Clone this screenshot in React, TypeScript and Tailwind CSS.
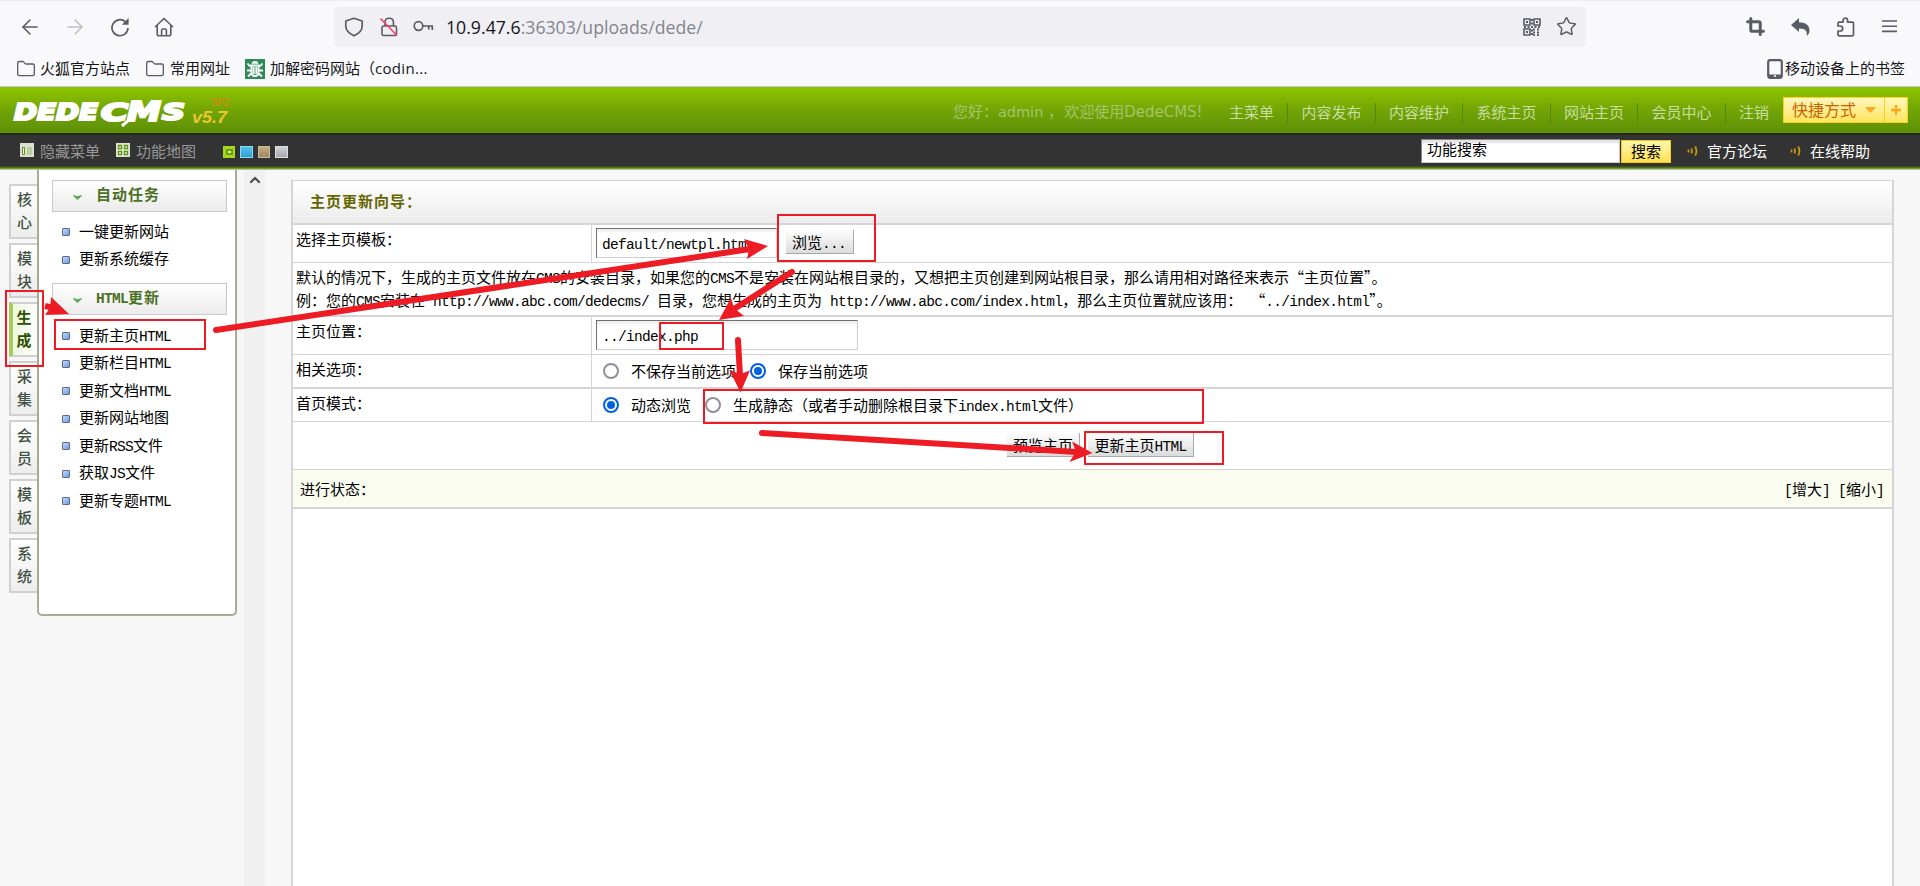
import type { ReactNode } from "react";
import { ArrowLeft, ArrowRight, ChevronUp, Crop, Folder, Star } from "lucide-react";

const NAV = ["主菜单", "内容发布", "内容维护", "系统主页", "网站主页", "会员中心", "注销"];
const TABS = ["核心", "模块", "生成", "采集", "会员", "模板", "系统"];

interface MenuItem {
  zh: string;
  latin?: string;
  tail?: string;
}

const AUTO_TASKS: MenuItem[] = [{ zh: "一键更新网站" }, { zh: "更新系统缓存" }];

const HTML_TASKS: MenuItem[] = [
  { zh: "更新主页", latin: "HTML" },
  { zh: "更新栏目", latin: "HTML" },
  { zh: "更新文档", latin: "HTML" },
  { zh: "更新网站地图" },
  { zh: "更新", latin: "RSS", tail: "文件" },
  { zh: "获取", latin: "JS", tail: "文件" },
  { zh: "更新专题", latin: "HTML" },
];

// Half-width text: 8px per character next to 15px hanzi
function L({ children }: { children: ReactNode }) {
  return (
    <span className="whitespace-pre font-['Liberation_Mono',monospace] text-[14.5px] leading-[0] tracking-[-0.7px]">
      {children}
    </span>
  );
}

function BrowserBar() {
  return (
    <div className="h-[87px] border-b border-[#c6c6d0] bg-[#f9f9fb] font-['Open_Sans','Noto_Sans_CJK_SC',sans-serif] text-[#15141a]">
      <div className="flex h-[47px] items-center border-t border-[#ececf0] pt-[5px] text-[#5b5b66]">
        <ArrowLeft className="ml-[18px] size-6" strokeWidth={1.6} />
        <ArrowRight className="ml-[21px] size-6 text-[#bfbfc6]" strokeWidth={1.6} />
        <svg className="ml-[23px] size-5" viewBox="0 0 20 20" fill="none" stroke="currentColor" strokeWidth="1.7">
          <path d="M18 11a8 8 0 1 1-2.6-6.2" />
          <path d="M18.6 1v6.8h-6.8z" fill="currentColor" stroke="none" />
        </svg>
        <svg className="ml-6 size-5" viewBox="0 0 20 20" fill="none" stroke="currentColor" strokeWidth="1.6" strokeLinejoin="round">
          <path d="M1 10 10 1.5 19 10M3.2 8.5V17q0 1.8 1.8 1.8h10q1.8 0 1.8-1.8V8.5M7.6 18.6v-5q0-1.6 1.2-1.6h2.4q1.2 0 1.2 1.6v5" />
        </svg>
        <div className="ml-[160px] flex h-10 w-[1252px] items-center rounded-[5px] bg-[#f0f0f4] pl-[10px] pr-[9px]">
          <svg className="size-5" viewBox="0 0 20 20" fill="none" stroke="currentColor" strokeWidth="1.7" strokeLinejoin="round">
            <path d="M10 1.2 18.2 4v5c0 4.5-3.4 7.6-8.2 9.8C5.2 16.6 1.8 13.5 1.8 9V4z" />
          </svg>
          <svg className="ml-[15px] size-5" viewBox="0 0 20 20" fill="none" stroke="currentColor" strokeWidth="1.6">
            <path d="M6 9V5q0-3.800 4.200-3.800T14.400 5v4" />
            <rect x="3" y="9" width="14.5" height="9.5" rx="1.6" />
            <path d="m1.500 1.500 16.500 17" stroke="#ff3b6b" />
          </svg>
          <svg className="ml-[14px] h-5 w-[21px]" viewBox="0 0 21 20" fill="none" stroke="currentColor" strokeWidth="1.7">
            <circle cx="5.5" cy="9" r="4.3" />
            <path d="M9.800 9H20M19.300 9v4M15.700 9v3.400" />
          </svg>
          <span className="ml-[12px] text-[17.7px] leading-10 text-[#15141a]">
            10.9.47.6<span className="text-[#84848e]">:36303/uploads/dede/</span>
          </span>
          <svg className="ml-auto size-[18px]" viewBox="0 0 18 18" fill="none" stroke="currentColor" strokeWidth="1.6">
            <path d="M1 1h6v6H1zM11 1h6v6h-6zM1 11h6v6H1z" />
            <path d="M3 4h2M13 4h2M3 14h2M9 1v16M1 9h17" strokeDasharray="2 1.5" strokeWidth="2" />
            <path d="M10 11.500h8M10 14.500h8M10 17.200h8" strokeDasharray="2 2" strokeWidth="1.8" />
          </svg>
          <Star className="ml-[15px] size-[21px]" strokeWidth={1.7} />
        </div>
        <Crop className="ml-[160px] size-[19px]" strokeWidth={3.8} />
        <svg className="ml-[26px] h-[18px] w-[19px]" viewBox="0 0 19 18" fill="currentColor">
          <path d="M0 7 8 0v4.200c6.500 0 10.500 3 10.500 8.300 0 2.500-1.200 4.300-2.800 5.300.8-4.300-1-7.500-7.700-7.300V14z" />
        </svg>
        <svg className="ml-[26px] size-5" viewBox="0 0 20 20" fill="none" stroke="currentColor" strokeWidth="1.7" strokeLinejoin="round">
          <path d="M2 9V6.500Q2 5.200 3.300 5.200H7V3.500a2.300 2.300 0 0 1 4.600 0v1.700h4.600q1.300 0 1.300 1.300V17.500q0 1.300-1.300 1.300H3.300Q2 18.800 2 17.500V14h2.200a2.400 2.400 0 0 0 0-5z" />
        </svg>
        <svg className="ml-[26px] h-[14px] w-[15px]" viewBox="0 0 15 14" stroke="currentColor" strokeWidth="1.6">
          <path d="M0 1h15M0 6.200h15M0 11.400h15" />
        </svg>
      </div>
      <div className="flex h-[39px] items-center px-4 pt-[4px] text-[15px]">
        <Folder className="size-5 text-[#5b5b66]" strokeWidth={1.6} />
        <span className="ml-1">火狐官方站点</span>
        <Folder className="ml-[15px] size-5 text-[#5b5b66]" strokeWidth={1.6} />
        <span className="ml-[5px]">常用网址</span>
        <svg className="ml-[15px] size-5" viewBox="0 0 20 20" fill="none" stroke="#fff" strokeWidth="1.8">
          <rect width="20" height="20" fill="#2e8b57" stroke="none" />
          <path d="M6.500 4.800Q7 2 10 2t3.500 2.800z" fill="#fff" stroke="none" />
          <path d="M5 6.500h10M6.500 6v8.500Q7 17 10 17t3.500-2.500V6M2.500 4.500 5 7.500M17.500 4.500 15 7.500M2 11.500h4.500M18 11.500h-4.500M3 17.500l3.500-3.500M17 17.500 13.500 14M8.700 8v7M11.300 8v7" />
        </svg>
        <span className="ml-[5px]">
          加解密码网站（<span className="tracking-[0.3px]">codin...</span>
        </span>
        <svg className="ml-auto h-5 w-4" viewBox="0 0 16 20">
          <rect x="1.2" y="1.2" width="13.6" height="17.6" rx="2" fill="none" stroke="#5b5b66" strokeWidth="2.2" />
          <path d="M1 15.500h14V19H1z" fill="#5b5b66" />
          <circle cx="8" cy="17" r="1" fill="#fff" />
        </svg>
        <span className="ml-[2px] mr-[-1px]">移动设备上的书签</span>
      </div>
    </div>
  );
}

function Logo() {
  return (
    <svg className="h-[46px] w-[240px]" viewBox="0 0 240 46" fontFamily="'DejaVu Sans', sans-serif" fontWeight="bold" fontStyle="italic">
      <g fill="#fff" stroke="#fff" strokeWidth="2.2">
        <text x="14" y="33" fontSize="23" textLength="84" lengthAdjust="spacingAndGlyphs">DEDE</text>
        <text x="101" y="33.5" fontSize="24" textLength="27" lengthAdjust="spacingAndGlyphs">C</text>
        <text x="127" y="33.5" fontSize="27" textLength="34" lengthAdjust="spacingAndGlyphs">M</text>
        <text x="162" y="33" fontSize="23" textLength="23" lengthAdjust="spacingAndGlyphs">S</text>
        <path d="m130 32-8 7" strokeWidth="3" />
      </g>
      <text x="192" y="36" fontSize="17" fill="#ecc530" fontFamily="'Liberation Sans', sans-serif" textLength="35" lengthAdjust="spacingAndGlyphs">v5.7</text>
      <text x="211" y="19" fontSize="11" fill="#e08214" fontStyle="normal" fontWeight="normal" textLength="19" lengthAdjust="spacingAndGlyphs">SP2</text>
    </svg>
  );
}

function Speaker() {
  return (
    <svg className="h-3 w-3" viewBox="0 0 12 12" fill="none" stroke="#c99a0c" strokeWidth="1.8">
      <path d="M1.500 4.500v3M4.800 3.500v5M8.200 1.500q2.500 4.500 0 9" />
    </svg>
  );
}

function Header() {
  return (
    <header className="font-['DejaVu_Sans','Noto_Sans_CJK_SC',sans-serif] text-[15px]">
      <div className="flex h-[46px] justify-between bg-linear-to-b from-[#8ec500] via-[#72a505] to-[#5e8f08]">
        <Logo />
        <div className="flex items-center pr-3 pt-[5px] text-[#c9dda0]">
          <span className="mr-[14px] w-[262px] whitespace-nowrap text-[#a3c46a]">
            您好：<span className="text-[14.5px]">admin</span> ，<span className="ml-[1px]">欢迎使用</span>DedeCMS!
          </span>
          {NAV.map((n, i) => (
            <span
              key={n}
              className={
                i < NAV.length - 1
                  ? "mr-[13px] border-r border-[#578606] pr-[13.5px] leading-[20px]"
                  : "leading-[20px]"
              }
            >
              {n}
            </span>
          ))}
          <div className="ml-[14px] mt-[-5px] flex h-[26px] border border-[#f7d417] bg-linear-to-b from-[#fff6b8] to-[#ffe55c] text-[#cc6100]">
            <span className="flex w-[101px] items-center border-r border-[#f7d417] pl-[8px] text-[16px]">
              <span className="pt-[1px]">快捷方式</span>
              <svg className="ml-[9px] h-[6px] w-[11px]" viewBox="0 0 11 6" fill="#fba81f">
                <path d="M0 0h11L5.500 6z" />
              </svg>
            </span>
            <span className="flex w-[22px] items-center justify-center">
              <svg className="size-[10px]" viewBox="0 0 10 10" stroke="#fba81f" strokeWidth="2.5">
                <path d="M5 0v10M0 5h10" />
              </svg>
            </span>
          </div>
        </div>
      </div>
      <div className="flex h-[33px] items-center border-t-2 border-[#25290f] bg-[#333] text-[#979797]">
        <svg className="ml-5 size-[15px]" viewBox="0 0 15 15">
          <path d="M0 0h14v14H0z" fill="#dcdfd4" />
          <path d="M2.500 4.500h2v7h-2z" fill="#fff" stroke="#5d9410" />
          <path d="M7 4h5v8H7z" fill="#b9cfa0" />
        </svg>
        <span className="ml-[5px] pt-[3px]">隐藏菜单</span>
        <svg className="ml-[16px] size-[15px]" viewBox="0 0 15 15">
          <path d="M0 0h14v14H0z" fill="#dfe5d2" />
          <path d="M2.500 2.500h3v3h-3zM8.500 2.500h3v3h-3zM2.500 8.500h3v3h-3zM8.500 8.500h3v3h-3z" fill="#fff" stroke="#5d9410" strokeWidth="1.3" />
        </svg>
        <span className="ml-[5px] pt-[3px]">功能地图</span>
        <div className="ml-[27px] flex gap-[5px] pt-[2px]">
          <span className="flex size-3 items-center justify-center bg-[#a6d61e]">
            <span className="h-[6px] w-[7px] border-2 border-[#6c9e08] bg-[#e6f5a8]" />
          </span>
          <span className="h-3 w-[13px] border border-[#8ed8f3] bg-linear-to-b from-[#53c3ec] to-[#2c9fd3]" />
          <span className="h-3 w-[12px] border border-[#cbbb98] bg-linear-to-b from-[#c4ae83] to-[#9b8867]" />
          <span className="h-3 w-[13px] border border-[#dcdfe2] bg-linear-to-b from-[#cfd2d6] to-[#a5a9ae]" />
        </div>
        <div className="ml-auto flex h-6 w-[199px] items-center border border-[#8a8a8a] border-b-[#ccc] border-r-[#ccc] bg-white pl-[5px] text-black shadow-[inset_0_3px_2px_#e4e4e4]">
          功能搜索
        </div>
        <button className="ml-[1px] mt-[2px] h-[23px] w-[50px] border border-[#f7c917] bg-linear-to-b from-[#fff6b0] to-[#ffe248] leading-[20px] text-black">
          搜索
        </button>
        <div className="ml-[16px] flex items-center text-white">
          <Speaker />
          <span className="ml-[8px] pt-[3px]">官方论坛</span>
        </div>
        <div className="ml-[23px] mr-[50px] flex items-center text-white">
          <Speaker />
          <span className="ml-[8px] pt-[3px]">在线帮助</span>
        </div>
      </div>
      <div className="h-1 bg-linear-to-b from-[#31400f] via-[#5d7f2a] to-[#cfe2a6]" />
    </header>
  );
}

function MenuHeading({ children }: { children: ReactNode }) {
  return (
    <div className="flex h-[32px] items-center border border-[#c9c9c9] bg-linear-to-b from-white to-[#ebebeb] pb-[5px] pl-[20px] font-bold tracking-[1px] text-[#4b7125]">
      <svg className="mr-[14px] mt-[7px] h-[5px] w-[9px]" viewBox="0 0 10 6" fill="#5da95a">
        <path d="m0 0 5 1.500L10 0v1.500L5 6 0 1.500z" />
      </svg>
      <span>{children}</span>
    </div>
  );
}

function MenuList({ items }: { items: MenuItem[] }) {
  return (
    <ul className="pl-[10px]">
      {items.map((m) => (
        <li key={m.zh + m.latin} className="flex h-[27.5px] items-center whitespace-nowrap">
          <span className="mr-[9px] mt-[3px] size-2 rounded-[1px] border border-[#5f6a7c] bg-linear-to-br from-[#bfd9ff] to-[#6d9be8]" />
          <span>
            {m.zh}
            {m.latin && <L>{m.latin}</L>}
            {m.tail}
          </span>
        </li>
      ))}
    </ul>
  );
}

function Sidebar() {
  return (
    <aside className="flex w-[244px] shrink-0">
      <div className="ml-[9px] w-7 pt-[14px]">
        {TABS.map((t) => (
          <div
            key={t}
            className={
              t === "生成"
                ? "mb-[4px] flex h-[55px] flex-col items-center border-2 border-l-4 border-r-0 border-[#d0d0d0] border-l-[#a3cb60] bg-linear-to-r from-[#eef6dd] to-white pr-[2px] pt-[2px] font-bold leading-[22.5px] text-[#2c5000]"
                : "mb-[4px] flex h-[55px] flex-col items-center border-2 border-r-0 border-[#d0d0d0] bg-linear-to-b from-white to-[#ededed] pl-[1px] pt-[2px] font-medium leading-[22.5px] text-[#3f5140]"
            }
          >
            <span>{t[0]}</span>
            <span>{t[1]}</span>
          </div>
        ))}
      </div>
      <div className="h-[446px] w-[200px] rounded-b-[5px] border-2 border-t-0 border-[#a9ab98] bg-white pl-[13px] pr-[8px] pt-[10px]">
        <MenuHeading>自动任务</MenuHeading>
        <div className="pb-[11px] pt-[5px]">
          <MenuList items={AUTO_TASKS} />
        </div>
        <MenuHeading>
          <L>HTML</L>更新
        </MenuHeading>
        <div className="pt-[6px]">
          <MenuList items={HTML_TASKS} />
        </div>
      </div>
    </aside>
  );
}

function Radio({ on }: { on?: boolean }) {
  return on ? (
    <span className="flex size-4 items-center justify-center rounded-full border-2 border-[#0060df] bg-white">
      <span className="size-2 rounded-full bg-[#0060df]" />
    </span>
  ) : (
    <span className="size-4 rounded-full border-2 border-[#8f8f9d] bg-white" />
  );
}

function Row({ label, className, children }: { label: string; className: string; children: ReactNode }) {
  return (
    <div className={`flex border-[#d5d5d5] ${className}`}>
      <div className="w-[299px] border-r border-[#d5d5d5] pl-[3px] pt-[3px] leading-[22px]">{label}</div>
      <div className="flex flex-1 items-center">{children}</div>
    </div>
  );
}

function PushButton({ className, children }: { className: string; children: ReactNode }) {
  return (
    <button className={`h-6 border-b border-r border-[#a8a8a8] bg-linear-to-b from-[#fdfdfd] to-[#dcdcdc] leading-[20px] ${className}`}>
      {children}
    </button>
  );
}

function TextField({ className, children }: { className: string; children: ReactNode }) {
  return (
    <div className={`ml-1 flex h-[30px] items-center border border-[#cfcfcf] border-l-[#707070] border-t-[#707070] bg-white pl-[5px] pt-[3px] shadow-[inset_0_3px_2px_#f0f0f0] ${className}`}>
      <L>{children}</L>
    </div>
  );
}

function UpdatePanel() {
  return (
    <main className="ml-[26px] mr-[26px] mt-[10px] flex flex-1 flex-col border-x-2 border-t border-[#d5d5d5] bg-white">
      <div className="h-[44px] border-b-2 border-[#d5d5d5] bg-linear-to-b from-white to-[#ececec] pl-[17px] pt-[9px] font-bold leading-[22px] tracking-[1px] text-[#666600]">
        主页更新向导：
      </div>
      <Row label="选择主页模板：" className="h-[38px] border-b">
        <TextField className="mb-[1px] w-[181px]">default/newtpl.htm</TextField>
        <PushButton className="mb-[3px] ml-[9px] w-[68px] text-left">
          <span className="ml-[6px]">浏览</span>
          <L>...</L>
        </PushButton>
      </Row>
      <div className="h-[54px] whitespace-nowrap border-b-2 border-[#d5d5d5] pl-[3px] pt-[3px] leading-[22.5px]">
        <p>
          默认的情况下，生成的主页文件放在<L>CMS</L>的安装目录，如果您的<L>CMS</L>
          不是安装在网站根目录的，又想把主页创建到网站根目录，那么请用相对路径来表示“主页位置”。
        </p>
        <p>
          例：您的<L>CMS</L>安装在<L> http://www.abc.com/dedecms/ </L>目录，您想生成的主页为
          <L> http://www.abc.com/index.html</L>，那么主页位置就应该用：<L> </L>“<L>../index.html</L>”。
        </p>
      </div>
      <Row label="主页位置：" className="h-[38px] border-b">
        <TextField className="mb-[1px] w-[262px]">../index.php</TextField>
      </Row>
      <Row label="相关选项：" className="h-[34px] border-b-2">
        <span className="ml-[11px]" />
        <Radio />
        <span className="ml-[12px] w-[119px]">不保存当前选项</span>
        <Radio on />
        <span className="ml-[12px]">保存当前选项</span>
      </Row>
      <Row label="首页模式：" className="h-[33px] border-b">
        <span className="ml-[11px]" />
        <Radio on />
        <span className="ml-[12px] w-[74px]">动态浏览</span>
        <Radio />
        <span className="ml-[12px] whitespace-nowrap">
          生成静态（或者手动删除根目录下<L>index.html</L>文件）
        </span>
      </Row>
      <div className="flex h-[48px] justify-center gap-2 border-b border-[#d5d5d5] pl-[16px] pt-[11px]">
        <PushButton className="w-[73px]">预览主页</PushButton>
        <PushButton className="w-[106px]">
          更新主页<L>HTML</L>
        </PushButton>
      </div>
      <div className="flex h-[39px] items-center justify-between border-b-2 border-[#d5d5d5] bg-[#f9fcef] pl-[7px] pr-[8px]">
        <span>进行状态：</span>
        <span>
          <L>[</L>增大<L>] [</L>缩小<L>]</L>
        </span>
      </div>
    </main>
  );
}

// Red walkthrough marks drawn on top of the page
function Annotations() {
  return (
    <svg className="pointer-events-none absolute left-0 top-0" width="1920" height="886" viewBox="0 0 1920 886">
      <g fill="none" stroke="#ed1c24" strokeWidth="2">
        <rect x="6" y="291" width="37" height="75" />
        <rect x="55" y="320" width="150" height="29" />
        <rect x="778" y="215" width="97" height="46" />
        <rect x="660" y="323" width="63" height="26" />
        <rect x="704" y="390" width="499" height="33" />
        <rect x="1085" y="432" width="138" height="32" />
      </g>
      <g fill="none" stroke="#ed1c24" strokeWidth="6" strokeLinecap="round">
        <path d="M216 330 750 249" />
        <path d="M792 272 734 309" />
        <path d="M738 340 740 376" />
        <path d="M762 433 1076 452" />
        <path d="M45 306 54 308" strokeLinecap="butt" />
      </g>
      <g fill="#ed1c24">
        <path d="m768 246-24-7 5 10-2 10z" />
        <path d="m719 320 12-22 3 10 10 8z" />
        <path d="m740.500 392.500-11-22.500 11 4 9.500-3.500z" />
        <path d="m1092.500 453-20.500-11.500 4 10-6.500 10.500z" />
        <path d="M69 314 51 297l-1 11-5 7z" />
      </g>
    </svg>
  );
}

export default function App() {
  return (
    <div className="relative flex h-[886px] w-[1920px] flex-col overflow-hidden bg-[#f7f7f7]">
      <BrowserBar />
      <Header />
      <div
        lang="zh-CN"
        className="flex flex-1 font-['Noto_Sans_CJK_SC',sans-serif] text-[15px] leading-[22px] text-black"
      >
        <Sidebar />
        <div className="flex w-[21px] shrink-0 justify-center bg-[#f0f0f0] pt-[2px]">
          <ChevronUp className="size-4 text-[#505050]" strokeWidth={3.5} />
        </div>
        <UpdatePanel />
      </div>
      <Annotations />
    </div>
  );
}
